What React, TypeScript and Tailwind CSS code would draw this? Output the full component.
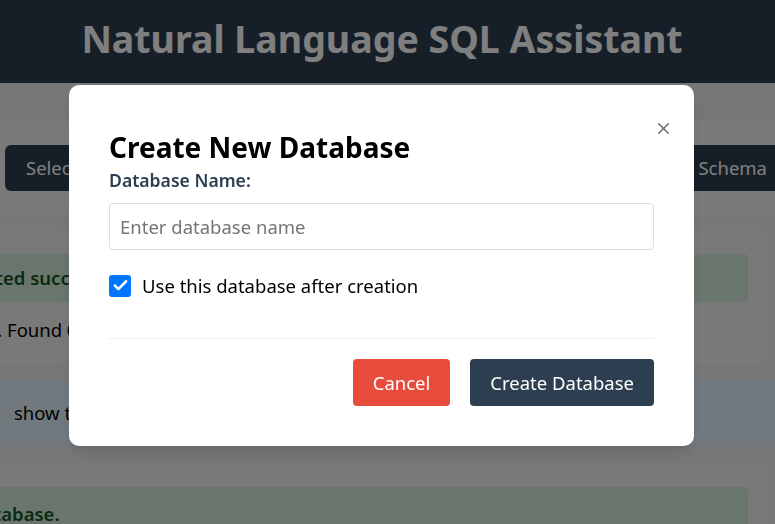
import { Check, X } from 'lucide-react';

const font = { fontFamily: '"Segoe UI", "Noto Sans", "Open Sans", sans-serif' };

function Background() {
  return (
    <div className="h-[524px] w-[775px] overflow-hidden bg-[#efefef]">
      {/* Header */}
      <header className="flex h-[83px] items-center justify-center bg-[#2c3e50] pb-[4px] pr-[11px]">
        <h1 className="text-[37.5px] font-bold text-white">Natural Language SQL Assistant</h1>
      </header>

      <div className="h-[39px] border-b border-[#fafafa] bg-[#ececec]" />

      {/* Toolbar */}
      <div className="flex h-[92px] items-center justify-between border-b border-[#fafafa] bg-[#f4f4f4] pl-[5px]">
        <button className="h-[46px] shrink-0 rounded-md bg-[#2c3e50] px-[21px] text-[18.5px] text-white">
          Select Database
        </button>
        <button className="-mr-[13px] h-[46px] shrink-0 rounded-md bg-[#2c3e50] px-[21px] text-[18.5px] text-white">
          View Schema
        </button>
      </div>

      {/* Chat */}
      <div className="flex flex-col pt-[15px]">
        <div className="flex justify-end pr-[7px]">
          <div className="h-[135px] w-[943px] shrink-0 rounded-xl bg-[#f3f3f3] px-[20px] pt-[25px]">
            <div className="flex h-[48px] items-center rounded bg-[#d4edda] px-[22px] text-[18.5px] font-semibold text-[#155724]">
              Database created successfully
            </div>
            <p className="mt-[14px] text-[18.5px] text-black">Database created. Found 0 tables.</p>
          </div>
        </div>

        <div className="mt-[16px] flex h-[66px] items-center bg-[#e3f2fd] px-[14px] text-[18.5px] text-black">
          show tables in this database
        </div>

        <div className="mt-[18px] flex justify-end pr-[7px]">
          <div className="h-[135px] w-[943px] shrink-0 rounded-xl bg-[#f3f3f3] px-[20px] pt-[23px]">
            <div className="flex h-[48px] items-center rounded bg-[#d4edda] px-4 pt-[6px] text-[18.5px] font-semibold text-[#155724]">
              Switched to database.
            </div>
          </div>
        </div>
      </div>
    </div>
  );
}

function CreateDatabaseModal() {
  return (
    <div className="fixed inset-0 flex items-start justify-center bg-black/50 pt-[85px]">
      <div className="relative mr-[12px] w-[625px] rounded-[10px] bg-white px-[40px] pb-[40px] pt-[45px] shadow-lg">
        <button className="absolute right-[21px] top-[34px] text-[#666]">
          <X size={19} strokeWidth={1.7} />
        </button>

        <h2 className="text-[28px] font-bold leading-[34px] text-black">Create New Database</h2>
        <label className="mt-[5px] block text-[17.6px] font-semibold leading-[23px] text-[#2c3e50]">
          Database Name:
        </label>
        <input
          type="text"
          placeholder="Enter database name"
          className="mt-[11px] h-[47px] w-full rounded border border-[#dddddd] px-[10px] text-[18.5px] placeholder-[#757575] outline-none"
        />

        <div className="mt-[22px] flex h-[27px] items-center gap-[11px]">
          <span className="flex h-[22px] w-[22px] items-center justify-center rounded-[3px] bg-[#0075ff]">
            <Check size={17} strokeWidth={3.5} className="text-white" />
          </span>
          <span className="text-[18.5px] text-black">Use this database after creation</span>
        </div>

        <div className="mt-[39px] border-t border-[#eeeeee]" />

        <div className="mt-[20px] flex justify-end gap-[20px]">
          <button className="h-[47px] rounded bg-[#e74c3c] px-[20px] text-[18.5px] text-white">Cancel</button>
          <button className="h-[47px] rounded bg-[#2c3e50] px-[20px] text-[18.5px] text-white">Create Database</button>
        </div>
      </div>
    </div>
  );
}

export default function App() {
  return (
    <div style={font} className="relative">
      <Background />
      <CreateDatabaseModal />
    </div>
  );
}
